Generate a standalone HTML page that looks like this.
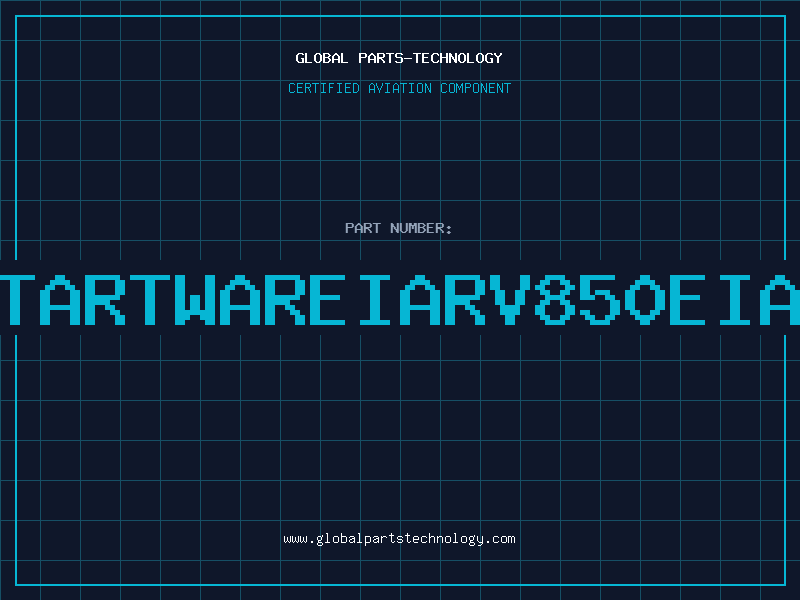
<!DOCTYPE html>
<html lang="en">
<head>
<meta charset="utf-8">
<title>Global Parts-Technology</title>
<style>
html,body{margin:0;padding:0}
body{width:800px;height:600px;overflow:hidden;position:relative;background-color:#0f172a;
background-image:linear-gradient(to right,#164f65 1px,transparent 1px),linear-gradient(to bottom,#164f65 1px,transparent 1px);
background-size:40px 40px;font-family:"Liberation Mono",monospace}
.frame{position:absolute;left:15px;top:15px;width:767px;height:567px;border:2px solid #06b6d4}
.band{position:absolute;left:0;top:260px;width:800px;height:75px;background:#0f172a}
svg{position:absolute;left:0;top:0;width:800px;height:600px;display:block}
.t{position:absolute;margin:0;white-space:nowrap;color:transparent;font-size:10px;line-height:10px;overflow:hidden;user-select:none}
</style>
</head>
<body>
<div class="frame"></div>
<div class="band"></div>
<h1 class="t" style="left:296px;top:53px;width:207px">GLOBAL PARTS-TECHNOLOGY</h1>
<p class="t" style="left:288px;top:83px;width:223px">CERTIFIED AVIATION COMPONENT</p>
<p class="t" style="left:346px;top:223px;width:106px">PART NUMBER:</p>
<p class="t" style="left:0;top:275px;width:800px;height:50px">TARTWAREIARV850EIA</p>
<p class="t" style="left:283px;top:533px;width:233px">www.globalpartstechnology.com</p>
<svg viewBox="0 0 800 600" shape-rendering="crispEdges" aria-hidden="true">
<path fill="#06b6d4" d="M0 275H35V280H0ZM10 280H20V325H10ZM55 275H65V280H55ZM50 280H70V285H50ZM45 285H55V290H45ZM65 285H75V290H65ZM40 290H50V305H40ZM70 290H80V305H70ZM40 305H80V310H40ZM40 310H50V325H40ZM70 310H80V325H70ZM85 275H120V280H85ZM85 280H95V295H85ZM115 280H125V295H115ZM85 295H120V300H85ZM85 300H110V305H85ZM85 305H95V325H85ZM105 305H115V310H105ZM110 310H120V315H110ZM115 315H125V325H115ZM130 275H170V280H130ZM145 280H155V325H145ZM175 275H185V310H175ZM205 275H215V310H205ZM190 295H200V310H190ZM175 310H215V315H175ZM175 315H190V320H175ZM200 315H215V320H200ZM175 320H185V325H175ZM205 320H215V325H205ZM235 275H245V280H235ZM230 280H250V285H230ZM225 285H235V290H225ZM245 285H255V290H245ZM220 290H230V305H220ZM250 290H260V305H250ZM220 305H260V310H220ZM220 310H230V325H220ZM250 310H260V325H250ZM265 275H300V280H265ZM265 280H275V295H265ZM295 280H305V295H295ZM265 295H300V300H265ZM265 300H290V305H265ZM265 305H275V325H265ZM285 305H295V310H285ZM290 310H300V315H290ZM295 315H305V325H295ZM310 275H345V280H310ZM310 280H320V295H310ZM310 295H340V300H310ZM310 300H320V320H310ZM310 320H345V325H310ZM360 275H390V280H360ZM370 280H380V320H370ZM360 320H390V325H360ZM415 275H425V280H415ZM410 280H430V285H410ZM405 285H415V290H405ZM425 285H435V290H425ZM400 290H410V305H400ZM430 290H440V305H430ZM400 305H440V310H400ZM400 310H410V325H400ZM430 310H440V325H430ZM445 275H480V280H445ZM445 280H455V295H445ZM475 280H485V295H475ZM445 295H480V300H445ZM445 300H470V305H445ZM445 305H455V325H445ZM465 305H475V310H465ZM470 310H480V315H470ZM475 315H485V325H475ZM490 275H500V290H490ZM520 275H530V290H520ZM495 290H505V305H495ZM515 290H525V305H515ZM500 305H520V315H500ZM505 315H515V325H505ZM545 275H565V280H545ZM540 280H550V285H540ZM560 280H570V285H560ZM535 285H545V290H535ZM565 285H575V290H565ZM540 290H550V295H540ZM560 290H570V295H560ZM545 295H565V300H545ZM540 300H550V305H540ZM560 300H570V305H560ZM535 305H545V315H535ZM565 305H575V315H565ZM540 315H550V320H540ZM560 315H570V320H560ZM545 320H565V325H545ZM580 275H615V280H580ZM580 280H590V295H580ZM595 290H610V295H595ZM580 295H595V300H580ZM605 295H615V300H605ZM610 300H620V315H610ZM580 310H590V315H580ZM585 315H595V320H585ZM605 315H615V320H605ZM590 320H610V325H590ZM640 275H650V280H640ZM635 280H655V285H635ZM630 285H640V290H630ZM650 285H660V290H650ZM625 290H635V310H625ZM655 290H665V310H655ZM630 310H640V315H630ZM650 310H660V315H650ZM635 315H655V320H635ZM640 320H650V325H640ZM670 275H705V280H670ZM670 280H680V295H670ZM670 295H700V300H670ZM670 300H680V320H670ZM670 320H705V325H670ZM720 275H750V280H720ZM730 280H740V320H730ZM720 320H750V325H720ZM775 275H785V280H775ZM770 280H790V285H770ZM765 285H775V290H765ZM785 285H795V290H785ZM760 290H770V305H760ZM790 290H800V305H790ZM760 305H800V310H760ZM760 310H770V325H760ZM790 310H800V325H790Z"/>
<path fill="#ffffff" d="M298 53H303V54H298ZM297 54H299V55H297ZM302 54H304V55H302ZM296 55H298V61H296ZM301 58H304V59H301ZM302 59H304V62H302ZM297 61H299V62H297ZM298 62H304V63H298ZM305 53H307V62H305ZM305 62H312V63H305ZM316 53H320V54H316ZM315 54H317V55H315ZM319 54H321V55H319ZM314 55H316V61H314ZM320 55H322V61H320ZM315 61H317V62H315ZM319 61H321V62H319ZM316 62H320V63H316ZM323 53H329V54H323ZM323 54H325V57H323ZM328 54H330V55H328ZM329 55H331V56H329ZM328 56H330V57H328ZM323 57H329V58H323ZM323 58H325V62H323ZM328 58H330V59H328ZM329 59H331V61H329ZM328 61H330V62H328ZM323 62H329V63H323ZM335 53H337V54H335ZM334 54H338V55H334ZM333 55H335V56H333ZM337 55H339V56H337ZM332 56H334V59H332ZM338 56H340V59H338ZM332 59H340V60H332ZM332 60H334V63H332ZM338 60H340V63H338ZM341 53H343V62H341ZM341 62H348V63H341ZM359 53H366V54H359ZM359 54H361V57H359ZM365 54H367V57H365ZM359 57H366V58H359ZM359 58H361V63H359ZM371 53H373V54H371ZM370 54H374V55H370ZM369 55H371V56H369ZM373 55H375V56H373ZM368 56H370V59H368ZM374 56H376V59H374ZM368 59H376V60H368ZM368 60H370V63H368ZM374 60H376V63H374ZM377 53H384V54H377ZM377 54H379V57H377ZM383 54H385V57H383ZM377 57H384V58H377ZM377 58H382V59H377ZM377 59H379V63H377ZM381 59H383V60H381ZM382 60H384V61H382ZM383 61H385V63H383ZM386 53H394V54H386ZM389 54H391V63H389ZM396 53H402V54H396ZM395 54H397V57H395ZM401 54H403V55H401ZM396 57H402V58H396ZM401 58H403V62H401ZM395 61H397V62H395ZM396 62H402V63H396ZM404 58H412V59H404ZM413 53H421V54H413ZM416 54H418V63H416ZM422 53H429V54H422ZM422 54H424V57H422ZM422 57H428V58H422ZM422 58H424V62H422ZM422 62H429V63H422ZM433 53H438V54H433ZM432 54H434V55H432ZM437 54H439V55H437ZM431 55H433V61H431ZM438 55H439V56H438ZM438 60H439V61H438ZM432 61H434V62H432ZM437 61H439V62H437ZM433 62H438V63H433ZM440 53H442V57H440ZM446 53H448V57H446ZM440 57H448V58H440ZM440 58H442V63H440ZM446 58H448V63H446ZM449 53H451V54H449ZM455 53H457V59H455ZM449 54H452V56H449ZM449 56H453V57H449ZM449 57H451V63H449ZM452 57H454V59H452ZM453 59H457V60H453ZM454 60H457V62H454ZM455 62H457V63H455ZM460 53H464V54H460ZM459 54H461V55H459ZM463 54H465V55H463ZM458 55H460V61H458ZM464 55H466V61H464ZM459 61H461V62H459ZM463 61H465V62H463ZM460 62H464V63H460ZM467 53H469V62H467ZM467 62H474V63H467ZM478 53H482V54H478ZM477 54H479V55H477ZM481 54H483V55H481ZM476 55H478V61H476ZM482 55H484V61H482ZM477 61H479V62H477ZM481 61H483V62H481ZM478 62H482V63H478ZM487 53H492V54H487ZM486 54H488V55H486ZM491 54H493V55H491ZM485 55H487V61H485ZM490 58H493V59H490ZM491 59H493V62H491ZM486 61H488V62H486ZM487 62H493V63H487ZM494 53H496V55H494ZM500 53H502V55H500ZM495 55H497V56H495ZM499 55H501V56H499ZM496 56H500V57H496ZM497 57H499V63H497Z"/>
<path fill="#06b6d4" shape-rendering="crispEdges" d="M290 83H294V84H290ZM289 84H290V92H289ZM294 84H295V85H294ZM294 91H295V92H294ZM290 92H294V93H290ZM297 83H303V84H297ZM297 84H298V87H297ZM297 87H302V88H297ZM297 88H298V92H297ZM297 92H303V93H297ZM305 83H310V84H305ZM305 84H306V87H305ZM310 84H311V87H310ZM305 87H310V88H305ZM305 88H306V93H305ZM308 88H309V89H308ZM309 89H310V91H309ZM310 91H311V93H310ZM312 83H319V84H312ZM315 84H316V93H315ZM321 83H326V84H321ZM323 84H324V92H323ZM321 92H326V93H321ZM329 83H334V84H329ZM329 84H330V87H329ZM329 87H333V88H329ZM329 88H330V93H329ZM337 83H342V84H337ZM339 84H340V92H339ZM337 92H342V93H337ZM345 83H351V84H345ZM345 84H346V87H345ZM345 87H350V88H345ZM345 88H346V92H345ZM345 92H351V93H345ZM353 83H357V84H353ZM353 84H354V92H353ZM357 84H358V85H357ZM358 85H359V91H358ZM357 91H358V92H357ZM353 92H357V93H353ZM371 83H373V84H371ZM370 84H371V85H370ZM373 84H374V85H373ZM369 85H370V89H369ZM374 85H375V89H374ZM369 89H375V90H369ZM369 90H370V93H369ZM374 90H375V93H374ZM376 83H377V86H376ZM382 83H383V86H382ZM377 86H378V88H377ZM381 86H382V88H381ZM378 88H379V90H378ZM380 88H381V90H380ZM379 90H380V93H379ZM385 83H390V84H385ZM387 84H388V92H387ZM385 92H390V93H385ZM395 83H397V84H395ZM394 84H395V85H394ZM397 84H398V85H397ZM393 85H394V89H393ZM398 85H399V89H398ZM393 89H399V90H393ZM393 90H394V93H393ZM398 90H399V93H398ZM400 83H407V84H400ZM403 84H404V93H403ZM409 83H414V84H409ZM411 84H412V92H411ZM409 92H414V93H409ZM418 83H422V84H418ZM417 84H418V92H417ZM422 84H423V92H422ZM418 92H422V93H418ZM425 83H426V84H425ZM430 83H431V90H430ZM425 84H427V86H425ZM425 86H426V93H425ZM427 86H428V88H427ZM428 88H429V90H428ZM429 90H431V92H429ZM430 92H431V93H430ZM442 83H446V84H442ZM441 84H442V92H441ZM446 84H447V85H446ZM446 91H447V92H446ZM442 92H446V93H442ZM450 83H454V84H450ZM449 84H450V92H449ZM454 84H455V92H454ZM450 92H454V93H450ZM456 83H457V84H456ZM462 83H463V84H462ZM456 84H458V86H456ZM461 84H463V86H461ZM456 86H457V93H456ZM458 86H459V88H458ZM460 86H461V88H460ZM462 86H463V93H462ZM459 88H460V90H459ZM465 83H470V84H465ZM465 84H466V87H465ZM470 84H471V87H470ZM465 87H470V88H465ZM465 88H466V93H465ZM474 83H478V84H474ZM473 84H474V92H473ZM478 84H479V92H478ZM474 92H478V93H474ZM481 83H482V84H481ZM486 83H487V90H486ZM481 84H483V86H481ZM481 86H482V93H481ZM483 86H484V88H483ZM484 88H485V90H484ZM485 90H487V92H485ZM486 92H487V93H486ZM489 83H495V84H489ZM489 84H490V87H489ZM489 87H494V88H489ZM489 88H490V92H489ZM489 92H495V93H489ZM497 83H498V84H497ZM502 83H503V90H502ZM497 84H499V86H497ZM497 86H498V93H497ZM499 86H500V88H499ZM500 88H501V90H500ZM501 90H503V92H501ZM502 92H503V93H502ZM504 83H511V84H504ZM507 84H508V93H507Z"/>
<path fill="#94a3b8" shape-rendering="geometricPrecision" d="M345.8 223H352.8V224H345.8ZM345.8 224H347.8V227H345.8ZM351.8 224H353.8V227H351.8ZM345.8 227H352.8V228H345.8ZM345.8 228H347.8V233H345.8ZM357.8 223H359.8V224H357.8ZM356.8 224H360.8V225H356.8ZM355.8 225H357.8V226H355.8ZM359.8 225H361.8V226H359.8ZM354.8 226H356.8V229H354.8ZM360.8 226H362.8V229H360.8ZM354.8 229H362.8V230H354.8ZM354.8 230H356.8V233H354.8ZM360.8 230H362.8V233H360.8ZM363.8 223H370.8V224H363.8ZM363.8 224H365.8V227H363.8ZM369.8 224H371.8V227H369.8ZM363.8 227H370.8V228H363.8ZM363.8 228H368.8V229H363.8ZM363.8 229H365.8V233H363.8ZM367.8 229H369.8V230H367.8ZM368.8 230H370.8V231H368.8ZM369.8 231H371.8V233H369.8ZM372.8 223H380.8V224H372.8ZM375.8 224H377.8V233H375.8ZM390.8 223H392.8V224H390.8ZM396.8 223H398.8V229H396.8ZM390.8 224H393.8V226H390.8ZM390.8 226H394.8V227H390.8ZM390.8 227H392.8V233H390.8ZM393.8 227H395.8V229H393.8ZM394.8 229H398.8V230H394.8ZM395.8 230H398.8V232H395.8ZM396.8 232H398.8V233H396.8ZM399.8 223H401.8V231H399.8ZM405.8 223H407.8V231H405.8ZM400.8 231H402.8V232H400.8ZM404.8 231H406.8V232H404.8ZM401.8 232H405.8V233H401.8ZM408.8 223H411.8V225H408.8ZM413.8 223H416.8V225H413.8ZM408.8 225H416.8V226H408.8ZM408.8 226H410.8V233H408.8ZM411.8 226H413.8V229H411.8ZM414.8 226H416.8V233H414.8ZM417.8 223H423.8V224H417.8ZM417.8 224H419.8V227H417.8ZM422.8 224H424.8V225H422.8ZM423.8 225H425.8V226H423.8ZM422.8 226H424.8V227H422.8ZM417.8 227H423.8V228H417.8ZM417.8 228H419.8V232H417.8ZM422.8 228H424.8V229H422.8ZM423.8 229H425.8V231H423.8ZM422.8 231H424.8V232H422.8ZM417.8 232H423.8V233H417.8ZM426.8 223H433.8V224H426.8ZM426.8 224H428.8V227H426.8ZM426.8 227H432.8V228H426.8ZM426.8 228H428.8V232H426.8ZM426.8 232H433.8V233H426.8ZM435.8 223H442.8V224H435.8ZM435.8 224H437.8V227H435.8ZM441.8 224H443.8V227H441.8ZM435.8 227H442.8V228H435.8ZM435.8 228H440.8V229H435.8ZM435.8 229H437.8V233H435.8ZM439.8 229H441.8V230H439.8ZM440.8 230H442.8V231H440.8ZM441.8 231H443.8V233H441.8ZM447.8 226H449.8V227H447.8ZM446.8 227H450.8V228H446.8ZM447.8 228H449.8V229H447.8ZM447.8 231H449.8V232H447.8ZM446.8 232H450.8V233H446.8ZM447.8 233H449.8V234H447.8Z"/>
<path fill="#ffffff" shape-rendering="crispEdges" d="M284 536H285V542H284ZM290 536H291V542H290ZM287 537H288V541H287ZM286 541H287V542H286ZM288 541H289V542H288ZM285 542H286V543H285ZM289 542H290V543H289ZM292 536H293V542H292ZM298 536H299V542H298ZM295 537H296V541H295ZM294 541H295V542H294ZM296 541H297V542H296ZM293 542H294V543H293ZM297 542H298V543H297ZM300 536H301V542H300ZM306 536H307V542H306ZM303 537H304V541H303ZM302 541H303V542H302ZM304 541H305V542H304ZM301 542H302V543H301ZM305 542H306V543H305ZM311 541H313V543H311ZM322 535H323V537H322ZM318 536H321V537H318ZM317 537H318V540H317ZM321 537H322V540H321ZM318 540H321V541H318ZM318 541H319V542H318ZM318 542H322V543H318ZM317 543H318V545H317ZM322 543H323V545H322ZM318 545H322V546H318ZM326 533H328V534H326ZM327 534H328V542H327ZM325 542H330V543H325ZM334 536H338V537H334ZM333 537H334V542H333ZM338 537H339V542H338ZM334 542H338V543H334ZM341 533H342V536H341ZM341 536H346V537H341ZM341 537H342V542H341ZM346 537H347V542H346ZM341 542H346V543H341ZM350 536H354V537H350ZM349 537H350V538H349ZM354 537H355V538H354ZM352 538H355V539H352ZM350 539H352V540H350ZM354 539H355V541H354ZM349 540H350V542H349ZM353 541H355V542H353ZM350 542H353V543H350ZM354 542H355V543H354ZM358 533H360V534H358ZM359 534H360V542H359ZM357 542H362V543H357ZM365 536H370V537H365ZM365 537H366V542H365ZM370 537H371V542H370ZM365 542H370V543H365ZM365 543H366V546H365ZM374 536H378V537H374ZM373 537H374V538H373ZM378 537H379V538H378ZM376 538H379V539H376ZM374 539H376V540H374ZM378 539H379V541H378ZM373 540H374V542H373ZM377 541H379V542H377ZM374 542H377V543H374ZM378 542H379V543H378ZM381 536H382V537H381ZM383 536H386V537H383ZM381 537H383V538H381ZM386 537H387V538H386ZM381 538H382V543H381ZM391 533H392V535H391ZM389 535H394V536H389ZM391 536H392V542H391ZM394 541H395V542H394ZM392 542H394V543H392ZM398 536H402V537H398ZM397 537H398V539H397ZM402 537H403V538H402ZM398 539H402V540H398ZM402 540H403V542H402ZM397 541H398V542H397ZM398 542H402V543H398ZM407 533H408V535H407ZM405 535H410V536H405ZM407 536H408V542H407ZM410 541H411V542H410ZM408 542H410V543H408ZM414 536H418V537H414ZM413 537H414V539H413ZM418 537H419V539H418ZM413 539H419V540H413ZM413 540H414V542H413ZM414 542H418V543H414ZM422 536H426V537H422ZM421 537H422V542H421ZM426 537H427V538H426ZM426 541H427V542H426ZM422 542H426V543H422ZM429 533H430V537H429ZM431 536H434V537H431ZM429 537H431V538H429ZM434 537H435V543H434ZM429 538H430V543H429ZM437 536H438V537H437ZM439 536H442V537H439ZM437 537H439V538H437ZM442 537H443V543H442ZM437 538H438V543H437ZM446 536H450V537H446ZM445 537H446V542H445ZM450 537H451V542H450ZM446 542H450V543H446ZM454 533H456V534H454ZM455 534H456V542H455ZM453 542H458V543H453ZM462 536H466V537H462ZM461 537H462V542H461ZM466 537H467V542H466ZM462 542H466V543H462ZM474 535H475V537H474ZM470 536H473V537H470ZM469 537H470V540H469ZM473 537H474V540H473ZM470 540H473V541H470ZM470 541H471V542H470ZM470 542H474V543H470ZM469 543H470V545H469ZM474 543H475V545H474ZM470 545H474V546H470ZM477 536H478V541H477ZM482 536H483V542H482ZM478 541H479V542H478ZM479 542H483V543H479ZM482 543H483V544H482ZM481 544H482V545H481ZM478 545H481V546H478ZM487 541H489V543H487ZM494 536H498V537H494ZM493 537H494V542H493ZM498 537H499V538H498ZM498 541H499V542H498ZM494 542H498V543H494ZM502 536H506V537H502ZM501 537H502V542H501ZM506 537H507V542H506ZM502 542H506V543H502ZM508 536H511V537H508ZM512 536H514V537H512ZM508 537H509V543H508ZM511 537H512V543H511ZM514 537H515V543H514Z"/>
</svg>
</body>
</html>
